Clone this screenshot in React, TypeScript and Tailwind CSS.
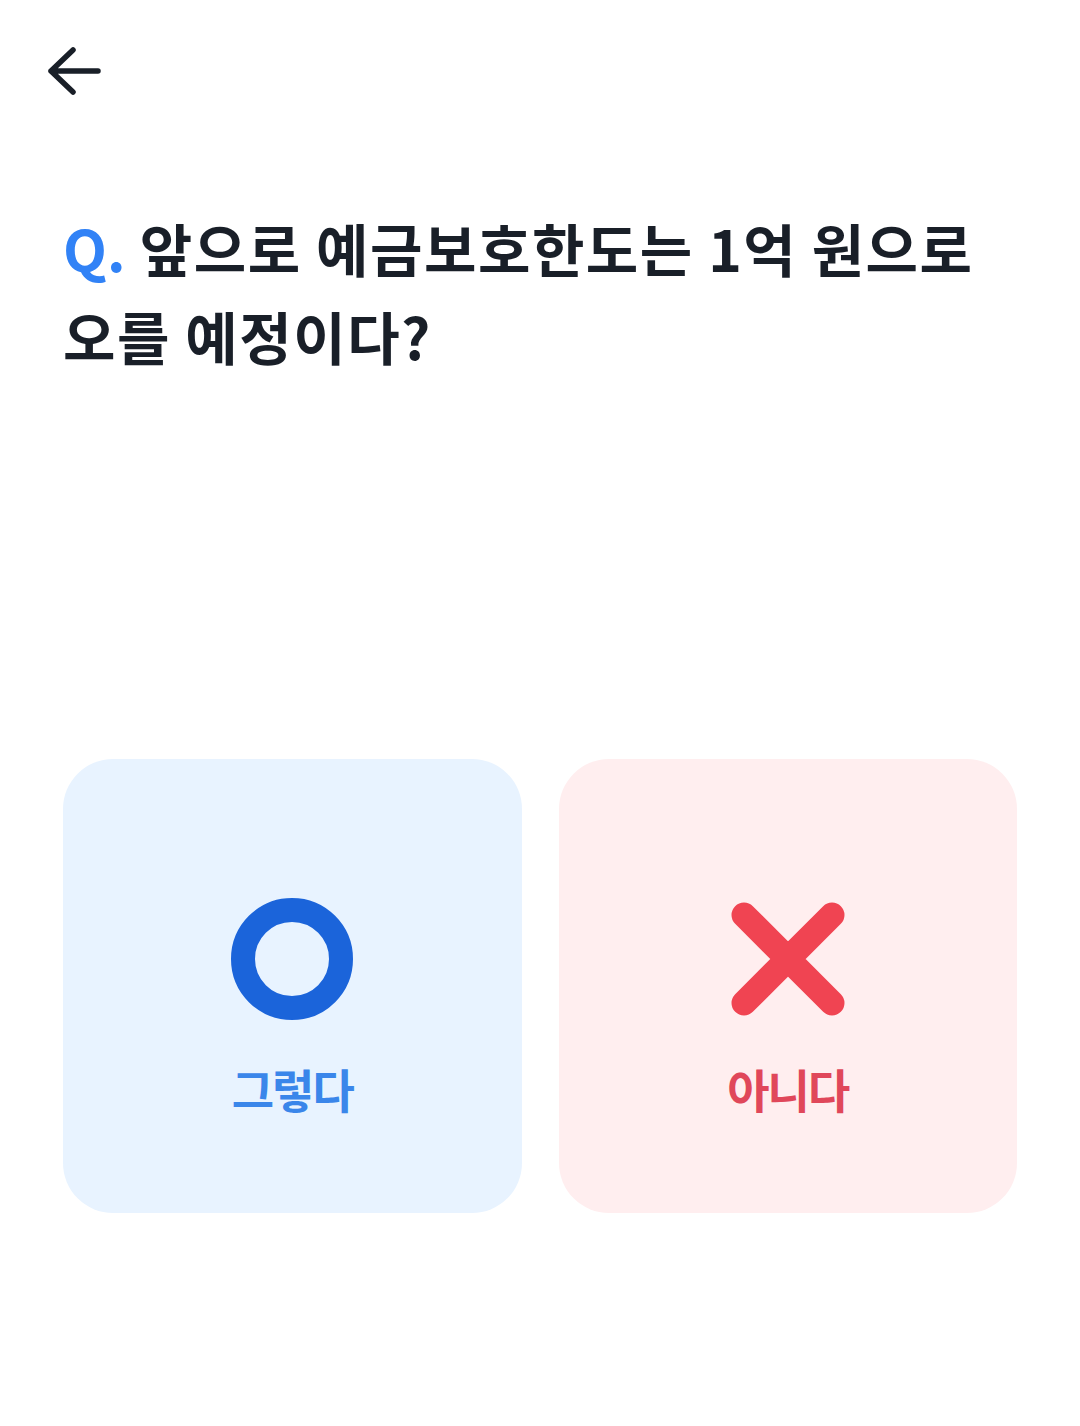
export default function App() {
  return (
    <div className="w-full min-h-[1426px] bg-white font-['Noto_Sans_CJK_KR','Noto_Sans',sans-serif]">
      {/* Top bar */}
      <div className="pt-[44px] pl-[44px]">
        <svg width="60" height="54" viewBox="0 0 60 54" fill="none">
          <path
            d="M29 6 L7 27 L29 48 M7 27 H54"
            stroke="#191F28"
            strokeWidth="5.5"
            strokeLinecap="round"
            strokeLinejoin="round"
          />
        </svg>
      </div>

      {/* Question */}
      <h1 className="mt-[105px] px-[63px] text-[57px] leading-[88px] font-bold text-[#191F28] tracking-[1.5px] break-keep">
        <span className="text-[#3182F6] tracking-normal">Q.</span> 앞으로 예금보호한도는 1억 원으로 오를 예정이다?
      </h1>

      {/* Answers */}
      <div className="mt-[380px] grid grid-cols-2 gap-[37px] px-[63px]">
        <button className="h-[454px] rounded-[50px] bg-[#E8F3FF] flex flex-col items-center pt-[139px]">
          <svg width="122" height="122" viewBox="0 0 122 122" fill="none">
            <circle cx="61" cy="61" r="49" stroke="#1B64DA" strokeWidth="24" />
          </svg>
          <span className="mt-[40px] text-[46px] leading-[56px] font-semibold text-[#3A86EA] tracking-[-2px]">
            그렇다
          </span>
        </button>
        <button className="h-[454px] rounded-[50px] bg-[#FFEEEF] flex flex-col items-center pt-[139px]">
          <svg width="122" height="122" viewBox="0 0 122 122" fill="none">
            <path
              d="M17 17 L105 105 M105 17 L17 105"
              stroke="#F04452"
              strokeWidth="25"
              strokeLinecap="round"
            />
          </svg>
          <span className="mt-[40px] text-[46px] leading-[56px] font-semibold text-[#E0475A] tracking-[-2px]">
            아니다
          </span>
        </button>
      </div>
    </div>
  );
}
